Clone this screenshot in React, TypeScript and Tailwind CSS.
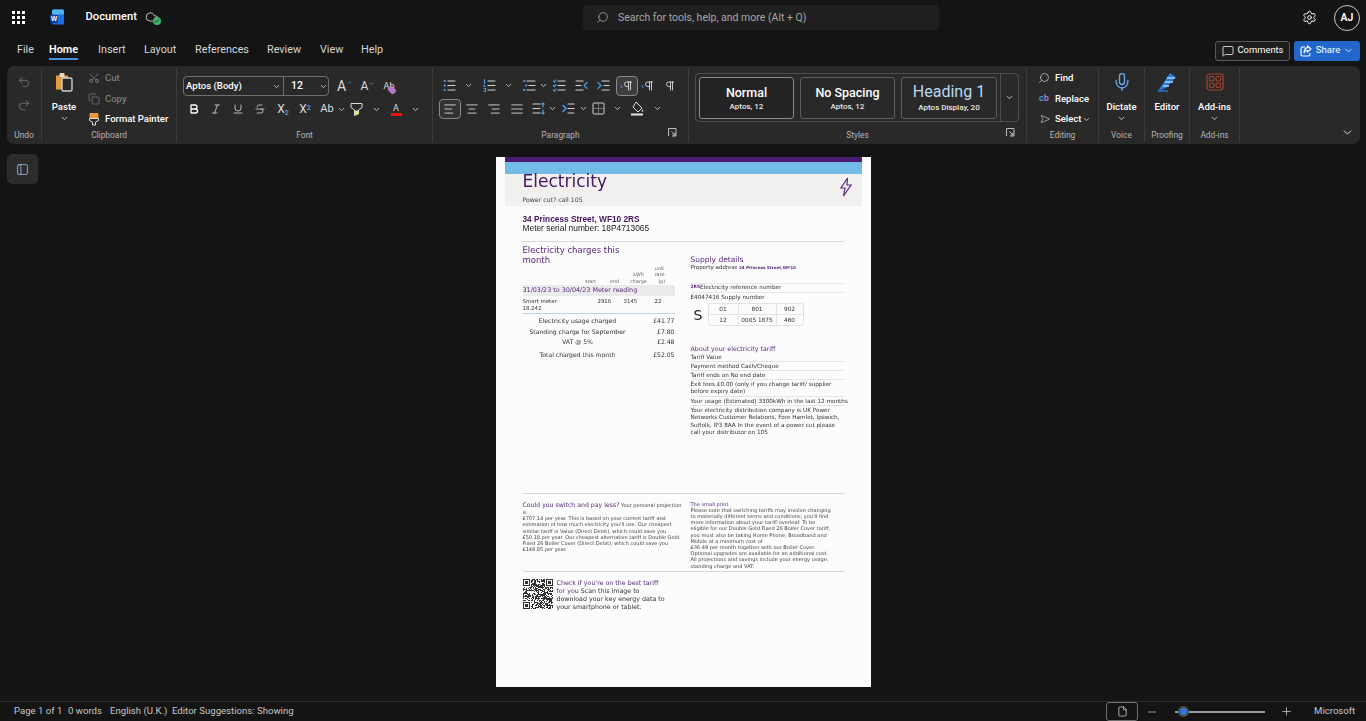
import type { ReactNode } from 'react';
import {
  AlignCenter, AlignJustify, AlignLeft, AlignRight, Bold, ChevronDown, ChevronUp, Cloud, Copy, Italic, Mic,
  MessageSquare, Minus, MousePointer2, Pilcrow, Plus, Search, Settings, Strikethrough, Underline,
  Undo2, Redo2, Scissors, File as FileIcon, PanelLeft, Check,
} from 'lucide-react';

const ui = 'font-["Roboto","Noto_Sans",sans-serif]';
const doc = 'font-["DejaVu_Sans",sans-serif]';

const tabs = [
  { label: 'File', cls: 'w-[32px]' },
  { label: 'Home', cls: 'w-[49px]', active: true },
  { label: 'Insert', cls: 'w-[46px]' },
  { label: 'Layout', cls: 'w-[51px]' },
  { label: 'References', cls: 'w-[72px]' },
  { label: 'Review', cls: 'w-[53px]' },
  { label: 'View', cls: 'w-[41px]' },
  { label: 'Help', cls: 'w-[40px]' },
];

function Chev({ cls = '' }: { cls?: string }) {
  return (
    <span className={`flex w-[8px] shrink-0 items-center justify-center ${cls}`}>
      <ChevronDown size={9} strokeWidth={2.2} className="shrink-0 text-[#d8d8d8]" />
    </span>
  );
}

function Ic({ cls = '', children }: { cls?: string; children: ReactNode }) {
  return <span className={`flex h-[20px] w-[16px] shrink-0 items-center justify-center text-[#dcdcdc] ${cls}`}>{children}</span>;
}

// little line icons for the paragraph row
function Lines({ kind }: { kind: string }) {
  const w = '#d4d4d4';
  const b = '#4a9be8';
  return (
    <svg width="15" height="15" viewBox="0 0 15 15" fill="none" strokeWidth="1.2" strokeLinecap="round">
      {kind === 'bullet' && (
        <>
          <path d="M6 3h7M6 7.5h7M6 12h7" stroke={w} />
          <path d="M2.5 3h.4M2.5 7.5h.4M2.5 12h.4" stroke={b} strokeWidth="2" />
        </>
      )}
      {kind === 'number' && (
        <>
          <path d="M6 3h7M6 7.5h7M6 12h7" stroke={w} />
          <path d="M2.5 1.5v4M2 7v1.5h1.2M2 10.5h1.5v3H2" stroke={b} />
        </>
      )}
      {kind === 'multi' && (
        <>
          <path d="M5 3h8M7 7.5h6M5 12h8" stroke={w} />
          <path d="M2 3h.4M4 7.5h.4M2 12h.4" stroke={b} strokeWidth="2" />
        </>
      )}
      {kind === 'check' && (
        <>
          <path d="M6 3h7M6 7.5h7M6 12h7" stroke={w} />
          <path d="M1.5 3l1 1 1.5-2M1.5 7.5l1 1 1.5-2M1.5 12l1 1 1.5-2" stroke={b} />
        </>
      )}
      {kind === 'outdent' && (
        <>
          <path d="M2 3h7M2 7.5h5M2 12h7" stroke={w} />
          <path d="M13 4.5L10 7.5l3 3" stroke={b} />
        </>
      )}
      {kind === 'indent' && (
        <>
          <path d="M6 3h7M8 7.5h5M6 12h7" stroke={w} />
          <path d="M2 4.5l3 3-3 3" stroke={b} />
        </>
      )}
      {kind === 'spacing' && (
        <>
          <path d="M2 3h7M2 7.5h7M2 12h7" stroke={w} />
          <path d="M12 2v4M10.8 3.2L12 2l1.2 1.2M12 9v4M10.8 11.8L12 13l1.2-1.2" stroke={b} />
        </>
      )}
      {kind === 'firstline' && (
        <>
          <path d="M7 3h6M7 7.5h6M7 12h6" stroke={w} />
          <path d="M2 4.5l3 3-3 3" stroke={b} strokeWidth="1.6" />
        </>
      )}
    </svg>
  );
}

function Pil({ arrow }: { arrow?: 'l' | 'r' }) {
  return (
    <span className="flex items-center">
      {arrow === 'r' && <span className="mr-[-1px] text-[8px] leading-none font-bold text-[#4a9be8]">&#8250;</span>}
      {arrow === 'l' && <span className="mr-[-1px] text-[8px] leading-none font-bold text-[#4a9be8]">&#8249;</span>}
      <Pilcrow size={12} strokeWidth={1.8} />
    </span>
  );
}

function Launcher() {
  return (
    <svg className="absolute right-[11px] bottom-[5px]" width="9" height="9" viewBox="0 0 9 9" fill="none" stroke="#bdbdbd" strokeWidth="1">
      <path d="M.5 8V.5H8V8H4" />
      <path d="M3.5 3.5L7 7M7 4.5V7H4.5" />
    </svg>
  );
}

function Group({ w, label, launcher, children }: { w: string; label?: string; launcher?: boolean; children?: ReactNode }) {
  return (
    <div className={`relative flex h-[74px] shrink-0 flex-col justify-between border-r border-[#3c3c3c] ${w}`}>
      <div className="min-h-0 flex-1">{children}</div>
      {label && <div className="h-[15px] text-center text-[8.4px] leading-[17px] text-[#b4b4b4]">{label}</div>}
      {launcher && <Launcher />}
    </div>
  );
}

function BigButton({ icon, label, chevron }: { icon: ReactNode; label: string; chevron?: boolean }) {
  return (
    <div className="flex flex-col items-center">
      <div className="mt-[2px] flex h-[24px] items-center justify-center">{icon}</div>
      <div className="mt-[5px] text-[9.5px] leading-[15px] font-medium whitespace-nowrap text-white">{label}</div>
      {chevron && <Chev cls="h-[9px]" />}
    </div>
  );
}

function StyleCard({ w, title, titleCls, sub }: { w: string; title: string; titleCls: string; sub: string }) {
  return (
    <div className={`flex h-[42px] flex-col items-center justify-center rounded-[3px] border border-[#5e5e5e] ${w}`}>
      <div className={titleCls}>{title}</div>
      <div className="text-[8px] leading-[11px] font-medium text-[#e6e6e6]">{sub}</div>
    </div>
  );
}

function EditRow({ icon, label, chevron, dim }: { icon: ReactNode; label: string; chevron?: boolean; dim?: boolean }) {
  return (
    <div className="flex h-[20.5px] items-center">
      <span className="flex w-[16px] shrink-0 justify-center text-[#c8c8c8]">{icon}</span>
      <span className={`ml-[3px] text-[9.5px] font-medium whitespace-nowrap ${dim ? 'text-[#7c7c7c]' : 'text-white'}`}>{label}</span>
      {chevron && <Chev cls="ml-[1px]" />}
    </div>
  );
}

function QrCode() {
  const rects: ReactNode[] = [];
  const n = 30;
  const inFinder = (x: number, y: number) => (x < 8 && y < 8) || (x >= n - 8 && y < 8) || (x < 8 && y >= n - 8);
  for (let y = 0; y < n; y++) {
    for (let x = 0; x < n; x++) {
      if (inFinder(x, y)) continue;
      const v = Math.sin(x * 12.9898 + y * 78.233) * 43758.5453;
      if (v - Math.floor(v) > 0.48) rects.push(<rect key={`${x}-${y}`} x={x} y={y} width="1" height="1" />);
    }
  }
  const finder = (x: number, y: number) => (
    <g key={`f${x}${y}`}>
      <path d={`M${x} ${y}h7v7h-7zM${x + 1} ${y + 1}v5h5v-5z`} fillRule="evenodd" />
      <rect x={x + 2} y={y + 2} width="3" height="3" />
    </g>
  );
  return (
    <svg width="30" height="30" viewBox="0 0 30 30" className="shrink-0 blur-[0.5px]" fill="#333333">
      {rects}
      {finder(0, 0)}
      {finder(23, 0)}
      {finder(0, 23)}
    </svg>
  );
}

const aboutRows = [
  ['Tariff Value'],
  ['Payment method Cash/Cheque'],
  ['Tariff ends on No end date'],
  ['Exit fees £0.00 (only if you change tariff/ supplier', 'before expiry date)'],
  ['Your usage (Estimated) 3300kWh in the last 12 months'],
];

const chargeRows = [
  { label: 'Electricity usage charged', value: '£41.77', cls: 'h-[10px]' },
  { label: 'Standing charge for September', value: '£7.80', cls: 'mt-[0.5px] h-[10px]' },
  { label: 'VAT @ 5%', value: '£2.48', cls: 'mt-[0.5px] h-[10px]' },
  { label: 'Total charged this month', value: '£52.05', cls: 'mt-[2.5px] h-[10px]' },
];

const switchLines = [
  'is',
  '£707.14 per year. This is based on your current tariff and',
  'estimation of how much electricity you\'ll use. Our cheapest',
  'similar tariff is Value (Direct Debit), which could save you',
  '£50.18 per year. Our cheapest alternative tariff is Double Gold',
  'Fixed 26 Boiler Cover (Direct Debit), which could save you',
  '£148.85 per year.',
];

const smallPrintLines = [
  'Please note that switching tariffs may involve changing',
  'to materially different terms and conditions; you\'ll find',
  'more information about your tariff overleaf. To be',
  'eligible for our Double Gold Fixed 26 Boiler Cover tariff,',
  'you must also be taking Home Phone, Broadband and',
  'Mobile at a minimum cost of',
  '£36.49 per month together with our Boiler Cover.',
  'Optional upgrades are available for an additional cost.',
  'All projections and savings include your energy usage,',
  'standing charge and VAT.',
];

function DocPage() {
  return (
    <div className={`h-[530px] w-[375px] shrink-0 overflow-hidden bg-white px-[9px] opacity-[0.99] ${doc}`}>
      <div className="h-[5px] bg-[#4b1a72]" />
      <div className="h-[12px] bg-[#74bde9]" />
      <div className="flex h-[32px] justify-between bg-[#f4f3f2] pr-[9px] pl-[18px]">
        <div>
          <div className="-mt-[3px] text-[17px] leading-[20px] text-[#4b1465]">Electricity</div>
          <div className="mt-[5px] text-[6.2px] leading-[8px] text-[#444]">Power cut? call 105</div>
        </div>
        <svg className="mt-[3px]" width="14" height="20" viewBox="0 0 14 20" fill="none" stroke="#5b2a80" strokeWidth="1.2">
          <path d="M8.5 1L2 11h4l-1.5 8L12 8H8z" />
        </svg>
      </div>

      <div className="px-[18px]">
        <div className='mt-[9px] font-["Liberation_Sans",sans-serif] text-[8.3px] leading-[9px] font-bold text-[#45135f]'>34 Princess Street, WF10 2RS</div>
        <div className='font-["Liberation_Sans",sans-serif] text-[8.4px] leading-[9.5px] text-[#222]'>Meter serial number: 18P4713065</div>
        <div className="mt-[7.5px] h-[1px] bg-[#dcdcdc]" />

        <div className="flex h-[251px]">
          {/* left column */}
          <div className="w-[152px] shrink-0">
            <div className="mt-[3px] w-[110px] text-[8.5px] leading-[10px] text-[#5b2a80]">Electricity charges this month</div>
            <div className="-mt-[1px] flex h-[21px] items-end text-center text-[4.8px] leading-[6.5px] text-[#666]">
              <span className="ml-[58px] w-[20px]">start</span>
              <span className="ml-[4px] w-[20px]">end</span>
              <span className="ml-[4px] w-[20px]">kWh<br />charge</span>
              <span className="ml-[1px] w-[20px]">unit<br />rate<br />&nbsp;&nbsp;&nbsp;(p)</span>
            </div>
            <div className="flex h-[11px] items-center bg-[#eeeeee] text-[6.4px] text-[#5b2a80]">31/03/23 to 30/04/23 Meter reading</div>
            <div className="mt-[1px] flex h-[17px] border-b border-[#b9d9ee] text-[5.4px] leading-[7px] text-[#333]">
              <span className="w-[70px] pt-[1px]">Smart meter<br />18.242</span>
              <span className="ml-[5px] w-[20px] pt-[1px]">2916</span>
              <span className="ml-[6px] w-[20px] pt-[1px]">3145</span>
              <span className="ml-[11px] pt-[1px]">22</span>
            </div>
            <div className="mt-[2px] text-[6.1px] text-[#333]">
              {chargeRows.map((r) => (
                <div key={r.label} className={`flex items-center ${r.cls}`}>
                  <span className="w-[110px] text-center whitespace-nowrap">{r.label}</span>
                  <span className="flex-1 text-right">{r.value}</span>
                </div>
              ))}
            </div>
          </div>

          {/* right column */}
          <div className="ml-[16px] w-[153px] shrink-0 text-[5.7px] text-[#333]">
            <div className="mt-[13px] text-[7.5px] leading-[10px] text-[#5b2a80]">Supply details</div>
            <div className="text-[5.5px] leading-[5px] whitespace-nowrap">
              Property address <span className="text-[4.1px] font-bold text-[#5b2a80]">34 Princess Street,WF10</span>
            </div>
            <div className="mt-[12.5px] flex h-[10px] items-center border-y border-[#ececec] whitespace-nowrap">
              <span className="text-[4.4px] font-bold text-[#5b2a80]">2RS</span>Electricity reference number
            </div>
            <div className="flex h-[10px] items-center whitespace-nowrap">E4047416 Supply number</div>
            <div className="mt-[0.5px] flex items-center">
              <span className="w-[17px] pl-[3px] text-[14px] leading-none text-[#222]">S</span>
              <div className="grid h-[23px] w-[96px] grid-cols-[30px_38px_1fr] grid-rows-2 overflow-hidden rounded-[3px] border border-[#e6e6e6] text-center text-[5.8px] leading-[11px] text-[#333]">
                <span className="border-r border-b border-[#e6e6e6]">01</span>
                <span className="border-r border-b border-[#e6e6e6]">801</span>
                <span className="border-b border-[#e6e6e6]">902</span>
                <span className="border-r border-[#e6e6e6]">12</span>
                <span className="border-r border-[#e6e6e6] whitespace-nowrap">0005 1875</span>
                <span>460</span>
              </div>
            </div>
            <div className="mt-[19px] text-[6.3px] leading-[8px] text-[#5b2a80]">About your electricity tariff</div>
            {aboutRows.map((lines, i) => (
              <div key={i} className="border-b border-[#e8e8e8] py-[0.8px] leading-[6.4px] whitespace-nowrap">
                {lines.map((l) => <div key={l} className={lines.length > 1 ? 'leading-[7.3px]' : ''}>{l}</div>)}
              </div>
            ))}
            <div className="mt-[0.5px] leading-[7.4px] whitespace-nowrap">
              <div>Your electricity distribution company is UK Power</div>
              <div>Networks Customer Relations, Fore Hamlet, Ipswich,</div>
              <div>Suffolk, IP3 8AA In the event of a power cut please</div>
              <div>call your distributor on 105</div>
            </div>
          </div>
        </div>

        <div className="h-[1px] bg-[#d8d8d8]" />
        <div className="flex h-[77px]">
          <div className="w-[168px] shrink-0 pt-[7px] text-[5px] leading-[6.2px] whitespace-nowrap text-[#444]">
            <div className="leading-[7px]">
              <span className="text-[6.2px] text-[#5b2a80]">Could you switch and pay less?</span> Your personal projection
            </div>
            {switchLines.map((l) => <div key={l}>{l}</div>)}
          </div>
          <div className="pt-[6.5px] text-[5.05px] leading-[6.2px] whitespace-nowrap text-[#444]">
            <div className="text-[#5b2a80]">The small print</div>
            {smallPrintLines.map((l) => <div key={l}>{l}</div>)}
          </div>
        </div>
        <div className="h-[1px] bg-[#d8d8d8]" />
        <div className="mt-[7px] flex">
          <QrCode />
          <div className="ml-[4px] text-[6.3px] leading-[8px] whitespace-nowrap text-[#333]">
            <div className="text-[#5b2a80]">Check if you&apos;re on the best tariff</div>
            <div><span className="text-[#5b2a80]">for you</span> Scan this image to</div>
            <div>download your key energy data to</div>
            <div>your smartphone or tablet.</div>
          </div>
        </div>
      </div>
    </div>
  );
}

export default function App() {
  return (
    <div className={`flex h-[721px] w-[1366px] flex-col overflow-hidden bg-[#141414] ${ui}`}>
      {/* title bar */}
      <div className="flex h-[35px] shrink-0 items-center">
        <div className="flex w-[583px] shrink-0 items-center">
          <div className="ml-[12px] grid grid-cols-3 gap-[2.5px]">
            {Array.from({ length: 9 }).map((_, i) => <span key={i} className="h-[2.5px] w-[2.5px] bg-white" />)}
          </div>
          <svg className="ml-[25px]" width="15" height="16" viewBox="0 0 15 16">
            <rect x="2" y="0.5" width="12" height="15" rx="1.5" fill="#1d6fe0" />
            <rect x="2" y="0.5" width="12" height="5" rx="1.5" fill="#4db3f5" />
            <rect x="0" y="6" width="8" height="8" rx="1" fill="#0f3f9e" />
            <text x="4" y="12.4" textAnchor="middle" fontSize="6.5" fontWeight="700" fill="#fff" fontFamily="Liberation Sans">W</text>
          </svg>
          <span className="ml-[21px] text-[11.2px] font-medium text-white">Document</span>
          <span className="relative ml-[7px] flex h-[16px] w-[16px] items-center justify-center">
            <Cloud size={14} strokeWidth={1.5} className="text-[#d8d8d8]" />
            <span className="absolute right-[-1px] bottom-[0px] flex h-[8px] w-[8px] items-center justify-center rounded-full bg-[#3fb56b]">
              <Check size={6} strokeWidth={3} className="text-[#10301c]" />
            </span>
          </span>
        </div>
        <div className="flex h-[25px] w-[356px] shrink-0 items-center rounded-[4px] bg-[#1f1f1f]">
          <Search size={13} strokeWidth={1.5} className="ml-[13px] -scale-x-100 text-[#a6a6a6]" />
          <span className="ml-[9px] text-[10.5px] whitespace-nowrap text-[#a6a6a6]">Search for tools, help, and more (Alt + Q)</span>
        </div>
        <Settings size={15} strokeWidth={1.6} className="ml-[363px] shrink-0 text-white" />
        <div className="ml-[17px] flex h-[26px] w-[26px] shrink-0 items-center justify-center rounded-full border border-[#c8c8c8] text-[10.5px] font-semibold text-white">AJ</div>
      </div>

      {/* tabs row */}
      <div className="flex h-[31px] shrink-0 items-center pl-[17px]">
        {tabs.map((t) => (
          <span key={t.label} className={`shrink-0 text-[10.8px] ${t.cls} ${t.active ? 'font-semibold text-white' : 'text-[#d6d6d6]'}`}>
            <span className="relative">
              {t.label}
              {t.active && <span className="absolute right-0 -bottom-[4px] left-0 h-[2px] bg-[#4a90e2]" />}
            </span>
          </span>
        ))}
        <div className="ml-auto flex h-[20px] w-[75px] items-center justify-center rounded-[3px] border border-[#5a5a5a] bg-[#1d1d1d] text-[9.4px] text-white">
          <MessageSquare size={12} strokeWidth={1.5} className="mr-[4px]" />
          Comments
        </div>
        <div className="mr-[6px] ml-[4px] flex h-[20px] w-[66px] items-center justify-center rounded-[3px] bg-[#2266cc] text-[9.6px] text-white">
          <svg className="mr-[4px]" width="12" height="12" viewBox="0 0 12 12" fill="none" stroke="#fff" strokeWidth="1.1">
            <path d="M5 2H2.5A1.5 1.5 0 0 0 1 3.5v6A1.5 1.5 0 0 0 2.5 11h6A1.5 1.5 0 0 0 10 9.5V8" />
            <path d="M7.5 1L11 4 7.5 7V5.5C5.5 5.5 4.5 6.5 4 8 4 5.5 5 3 7.5 2.6z" />
          </svg>
          Share
          <ChevronDown size={11} strokeWidth={1.7} className="ml-[3px]" />
        </div>
      </div>

      {/* ribbon */}
      <div className="mx-[7px] flex h-[78px] w-[1353px] shrink-0 items-center rounded-[7px] bg-[#292929]">
        <Group w="w-[35px]" label="Undo">
          <div className="flex flex-col items-center pt-[7px] text-[#7a7a7a]">
            <Undo2 size={14} strokeWidth={1.4} />
            <Redo2 size={14} strokeWidth={1.4} className="mt-[9px]" />
          </div>
        </Group>

        <Group w="w-[135px]" label="Clipboard">
          <div className="flex">
            <div className="w-[44px] shrink-0">
              <BigButton
                chevron
                label="Paste"
                icon={
                  <svg width="18" height="20" viewBox="0 0 18 20">
                    <path d="M1 3.5h12v14H1z" fill="#e69a3c" />
                    <rect x="4.5" y="1" width="5" height="4" rx="1" fill="#e9dcc6" />
                    <rect x="7" y="6" width="10" height="13" rx="1.5" fill="#292929" stroke="#cfcfcf" strokeWidth="1.4" />
                  </svg>
                }
              />
            </div>
            <div className="flex flex-col">
              <EditRow dim label="Cut" icon={<Scissors size={12} strokeWidth={1.4} className="-rotate-90 text-[#7f8b99]" />} />
              <EditRow dim label="Copy" icon={<Copy size={12} strokeWidth={1.5} className="text-[#7c7c7c]" />} />
              <EditRow
                label="Format Painter"
                icon={
                  <svg width="12" height="14" viewBox="0 0 12 14">
                    <path d="M1.5 1h9v5.5h-9z" fill="#e6983b" />
                    <path d="M1.5 6.5h9v2L7.5 10v3h-3v-3l-3-1.5z" fill="none" stroke="#dcdcdc" />
                  </svg>
                }
              />
            </div>
          </div>
        </Group>

        <Group w="w-[256px]" label="Font">
          <div className="pt-[8px] pl-[6px]">
            <div className="flex h-[20px] items-center">
              <div className="flex h-[20px] w-[146px] shrink-0 items-center rounded-[4px] border border-[#6e6e6e] text-[9.6px] font-medium text-white">
                <span className="flex w-[100px] shrink-0 items-center justify-between border-r border-[#6e6e6e] pr-[3px] pl-[2px] leading-[18px]">Aptos (Body)<Chev /></span>
                <span className="ml-[7px] w-[28px] shrink-0 text-[10.5px]">12</span>
                <Chev />
              </div>
              <span className="ml-[5px] flex w-[22px] shrink-0 items-start justify-center text-[14px] leading-none text-[#dcdcdc]">
                A<ChevronUp size={7} strokeWidth={2} className="text-[#4a9be8]" />
              </span>
              <span className="ml-[1px] flex w-[22px] shrink-0 items-start justify-center text-[12px] leading-none text-[#dcdcdc]">
                A<ChevronDown size={7} strokeWidth={2} className="text-[#4a9be8]" />
              </span>
              <span className="relative ml-[1px] w-[18px] shrink-0 text-center text-[9px] leading-none text-[#dcdcdc]">
                Ab
                <span className="absolute top-[5px] right-[2px] h-[6px] w-[8px] rotate-45 rounded-[2px] bg-[#b07cc6]" />
              </span>
            </div>
            <div className="mt-[3px] ml-[3px] flex h-[20px] items-center">
              <Ic><Bold size={12} strokeWidth={2.6} className="text-white" /></Ic>
              <Ic cls="ml-[6px]"><Italic size={12} strokeWidth={1.6} /></Ic>
              <Ic cls="ml-[6px]"><Underline size={12} strokeWidth={1.6} /></Ic>
              <Ic cls="ml-[6px]"><Strikethrough size={12} strokeWidth={1.6} /></Ic>
              <Ic cls="ml-[7px]"><span className="text-[12px]">X<sub className="text-[7px] font-bold text-[#4a9be8]">2</sub></span></Ic>
              <Ic cls="ml-[6px]"><span className="text-[12px]">X<sup className="text-[7px] font-bold text-[#4a9be8]">2</sup></span></Ic>
              <Ic cls="ml-[6px]"><span className="text-[11px]">Ab</span></Ic>
              <Chev cls="ml-[2px]" />
              <Ic cls="ml-[3px]">
                <svg width="13" height="15" viewBox="0 0 13 15" fill="none">
                  <path d="M1 1.5h11v4L8.5 8v4l-4 1.5V8L1 5.5z" stroke="#dcdcdc" />
                  <path d="M5 8.5h3V12l-3 1z" fill="#f5e63c" />
                </svg>
              </Ic>
              <Chev cls="ml-[8px]" />
              <Ic cls="ml-[8px] flex-col">
                <span className="text-[9px] leading-[10px]">A</span>
                <span className="h-[3px] w-[11px] bg-[#e81010]" />
              </Ic>
              <Chev cls="ml-[7px]" />
            </div>
          </div>
        </Group>

        <Group w="w-[256px]" label="Paragraph" launcher>
          <div className="pt-[7.5px] pl-[6px]">
            <div className="flex h-[20px] items-center pl-[2px]">
              <Ic><Lines kind="bullet" /></Ic>
              <Chev cls="ml-[7px]" />
              <Ic cls="ml-[9px]"><Lines kind="number" /></Ic>
              <Chev cls="ml-[7px]" />
              <Ic cls="ml-[9px]"><Lines kind="multi" /></Ic>
              <Chev cls="ml-[2px]" />
              <Ic cls="ml-[4px]"><Lines kind="check" /></Ic>
              <Ic cls="ml-[6px]"><Lines kind="outdent" /></Ic>
              <Ic cls="ml-[6px]"><Lines kind="indent" /></Ic>
              <span className="ml-[5px] flex h-[20px] w-[22px] items-center justify-center rounded-[4px] border border-[#8a8a8a] bg-[#3d3d3d] text-[#dcdcdc]"><Pil arrow="r" /></span>
              <Ic cls="ml-[2px]"><Pil arrow="l" /></Ic>
              <Ic cls="ml-[6px]"><Pil /></Ic>
            </div>
            <div className="mt-[3px] flex h-[20px] items-center">
              <span className="flex h-[20px] w-[22px] items-center justify-center rounded-[4px] border border-[#8a8a8a] bg-[#333] text-[#dcdcdc]"><AlignLeft size={14} strokeWidth={1.5} /></span>
              <Ic cls="ml-[3px]"><AlignCenter size={14} strokeWidth={1.5} /></Ic>
              <Ic cls="ml-[6px]"><AlignRight size={14} strokeWidth={1.5} /></Ic>
              <Ic cls="ml-[7px]"><AlignJustify size={14} strokeWidth={1.5} /></Ic>
              <Ic cls="ml-[5px]"><Lines kind="spacing" /></Ic>
              <Chev cls="ml-[2px]" />
              <Ic cls="ml-[4px]"><Lines kind="firstline" /></Ic>
              <Chev cls="ml-[3px]" />
              <Ic cls="ml-[3px]">
                <svg width="13" height="13" viewBox="0 0 13 13" fill="none" stroke="#cfcfcf">
                  <rect x="1" y="1" width="11" height="11" rx="1" />
                  <path d="M6.5 1v11M1 6.5h11" stroke="#777" />
                </svg>
              </Ic>
              <Chev cls="ml-[7px]" />
              <Ic cls="ml-[8px]">
                <svg width="15" height="15" viewBox="0 0 15 15" fill="none">
                  <path d="M6 1l6 6-4 4-5-5z" stroke="#dcdcdc" />
                  <path d="M1 12.5h12v2H1z" fill="#dcecf7" />
                  <path d="M12.5 8l1 2.5h-2z" fill="#dcdcdc" />
                </svg>
              </Ic>
              <Chev cls="ml-[8px]" />
            </div>
          </div>
        </Group>

        <Group w="w-[338px]" label="Styles" launcher>
          <div className="mt-[5px] ml-[6px] flex h-[49px] w-[324px] items-center rounded-[4px] border border-[#4e4e4e] pl-[3px]">
            <StyleCard w="w-[95px] border-[#8a8a8a] bg-[#232323]" title="Normal" titleCls="text-[12.5px] leading-[17px] font-medium text-white" sub="Aptos, 12" />
            <StyleCard w="ml-[6px] w-[95px]" title="No Spacing" titleCls="text-[12.5px] leading-[17px] font-medium text-white" sub="Aptos, 12" />
            <StyleCard w="ml-[6px] w-[96px]" title="Heading 1" titleCls="text-[16px] leading-[20px] text-[#b9d9ef]" sub="Aptos Display, 20" />
            <div className="ml-[3px] flex h-full flex-1 items-center justify-center border-l border-[#4e4e4e]">
              <Chev />
            </div>
          </div>
        </Group>

        <Group w="w-[72px]" label="Editing">
          <div className="pl-[9px]">
            <EditRow icon={<Search size={12} strokeWidth={1.5} className="-scale-x-100" />} label="Find" />
            <EditRow
              label="Replace"
              icon={<span className="text-[9px] leading-none font-semibold text-[#4a9be8]">c<span className="text-[#b07cc6]">b</span></span>}
            />
            <EditRow icon={<MousePointer2 size={12} strokeWidth={1.3} className="rotate-[135deg]" />} label="Select" chevron />
          </div>
        </Group>

        <Group w="w-[46px]" label="Voice">
          <BigButton chevron label="Dictate" icon={<Mic size={20} strokeWidth={1.6} className="text-[#6aa8ef]" />} />
        </Group>

        <Group w="w-[45px]" label="Proofing">
          <BigButton
            label="Editor"
            icon={
              <svg width="20" height="20" viewBox="0 0 20 20" fill="none">
                <path d="M1 19L13 1l6 4-10 11z" fill="#2a78d8" />
                <path d="M10 6h8M8 10h8M6 14h6" stroke="#a8d0f5" strokeWidth="1.3" />
                <path d="M1 19h10" stroke="#2a78d8" strokeWidth="1.4" />
              </svg>
            }
          />
        </Group>

        <Group w="w-[50px]" label="Add-ins">
          <BigButton
            chevron
            label="Add-ins"
            icon={
              <svg width="18" height="18" viewBox="0 0 18 18" fill="none" stroke="#a8412e" strokeWidth="1.2">
                <rect x="1" y="1" width="16" height="16" rx="3" />
                <rect x="3.5" y="3.5" width="4.5" height="4.5" rx="1.5" />
                <rect x="10" y="3.5" width="4.5" height="4.5" rx="1.5" />
                <rect x="3.5" y="10" width="4.5" height="4.5" rx="1.5" />
                <rect x="10" y="10" width="4.5" height="4.5" rx="1.5" />
              </svg>
            }
          />
        </Group>

        <div className="flex h-[74px] flex-1 items-end justify-end pr-[6px] pb-[3px]">
          <ChevronDown size={13} strokeWidth={1.8} className="text-[#e0e0e0]" />
        </div>
      </div>

      {/* document area */}
      <div className="relative flex min-h-0 flex-1 justify-center pt-[13px]">
        <div className="absolute top-[10px] left-[7px] flex h-[30px] w-[31px] items-center justify-center rounded-[5px] bg-[#2c2c2c] text-[#9cc4ec]">
          <PanelLeft size={13} strokeWidth={1.5} />
        </div>
        <DocPage />
      </div>

      {/* status bar */}
      <div className="flex h-[20px] shrink-0 items-center border-t border-[#2c2c2c] text-[9.6px] whitespace-nowrap text-[#c4c4c4]">
        <div className="flex w-[1106px] shrink-0 items-center pl-[14px]">
          <span className="w-[54px] shrink-0">Page 1 of 1</span>
          <span className="w-[42px] shrink-0">0 words</span>
          <span className="w-[62px] shrink-0">English (U.K.)</span>
          <span>Editor Suggestions: Showing</span>
        </div>
        <div className="flex h-[19px] w-[32px] shrink-0 items-center justify-center rounded-[3px] border border-[#6e6e6e]">
          <FileIcon size={11} strokeWidth={1.6} className="text-[#dcdcdc]" />
        </div>
        <Minus size={12} strokeWidth={1.5} className="ml-[8px] shrink-0" />
        <div className="relative ml-[17px] h-[2px] w-[90px] shrink-0 bg-[#9a9a9a]">
          <span className="absolute -top-[4.5px] left-[2.5px] h-[11px] w-[11px] rounded-full border-2 border-[#4a4a4a] bg-[#2a78e0]" />
        </div>
        <Plus size={13} strokeWidth={1.5} className="ml-[15px] shrink-0" />
        <span className="ml-[21px]">Microsoft</span>
      </div>
    </div>
  );
}
